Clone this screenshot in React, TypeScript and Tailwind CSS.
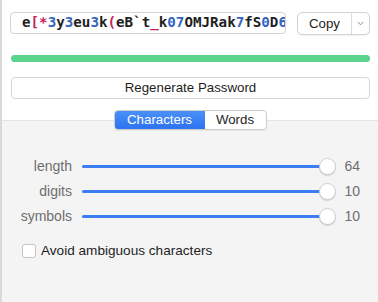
import React from "react";

const pw = "e[*3y3eu3k(eB`t_k07OMJRak7fS0D6p";

function colorFor(c: string) {
  if (/[0-9]/.test(c)) return "text-[#3464c4]";
  if (/[a-zA-Z]/.test(c)) return "text-[#1e1e1e]";
  if (c === "`") return "text-[#1e1e1e]";
  return "text-[#c2245a]";
}

function SliderRow({ label, value }: { label: string; value: string }) {
  return (
    <div className="flex h-[25px] items-center text-[14px]">
      <div className="w-[70px] text-right text-[#6e6e6e]">{label}</div>
      <div className="relative ml-[10px] h-[17px] flex-1">
        <div className="absolute left-0 right-[8px] top-[7px] h-[3px] rounded-full bg-[#3b7ef4]" />
        <div className="absolute right-0 top-0 h-[17px] w-[17px] rounded-full border border-[#cfcfcf] bg-white shadow-[0_1px_1px_rgba(0,0,0,0.15)]" />
      </div>
      <div className="w-[24px] text-right text-[#6e6e6e]">{value}</div>
      <div className="w-[18px]" />
    </div>
  );
}

export default function App() {
  return (
    <div
      className="flex h-[302px] w-[378px] border-l-2 border-[#d9d9d9] text-[13.3px]"
      style={{ fontFamily: '"Liberation Sans", Arial, sans-serif' }}
    >
      <div className="flex flex-1 flex-col">
        <div className="flex h-[120px] flex-col bg-white pl-[8px] pr-[8px] pt-[12px]">
          <div className="flex h-[23px] items-start">
            <div
              className="flex h-[22px] w-[276px] items-center overflow-hidden whitespace-nowrap rounded-[4px] border border-[#d4d4d4] pl-[11px] pr-[6px] text-[14.2px] font-bold"
              style={{ fontFamily: '"DejaVu Sans Mono", "Liberation Mono", monospace' }}
            >
              {pw.split("").map((c, i) => (
                <span key={i} className={colorFor(c)}>
                  {c}
                </span>
              ))}
            </div>
            <div className="ml-[11px] flex h-[23px] w-[73px] rounded-[5px] border border-[#d2d2d2] bg-white shadow-[0_1px_1px_rgba(0,0,0,0.06)]">
              <div className="flex flex-1 items-center justify-center text-[#1e1e1e]">Copy</div>
              <div className="w-px bg-[#dcdcdc]" />
              <div className="flex w-[17px] items-center justify-center">
                <svg width="7" height="5" viewBox="0 0 7 5">
                  <path d="M0.8 1 L3.5 3.8 L6.2 1" fill="none" stroke="#8a8a8a" strokeWidth="1" />
                </svg>
              </div>
            </div>
          </div>
          <div className="ml-[1px] mt-[20px] h-[7px] rounded-full bg-[#5ad38c]" />
          <div className="ml-[1px] mt-[15px] flex h-[22px] items-center justify-center rounded-[4px] border border-[#d6d6d6] bg-white text-[#1e1e1e]">
            Regenerate Password
          </div>
        </div>
        <div className="flex flex-1 flex-col border-t border-[#e4e4e4] bg-[#f4f4f4]">
          <div className="relative -mt-[11px] flex justify-center">
            <div className="flex h-[20px] overflow-hidden rounded-[4px] border border-[#cdcdcd] bg-white shadow-[0_1px_1px_rgba(0,0,0,0.06)]">
              <div className="flex w-[90px] items-center justify-center bg-gradient-to-b from-[#4b90f8] to-[#2d72ef] text-white">
                Characters
              </div>
              <div className="flex w-[61px] items-center justify-center text-[#1e1e1e]">Words</div>
            </div>
          </div>
          <div className="mt-[24px] flex flex-col">
            <SliderRow label="length" value="64" />
            <SliderRow label="digits" value="10" />
            <SliderRow label="symbols" value="10" />
          </div>
          <div className="ml-[20px] mt-[12px] flex items-center">
            <div className="h-[14px] w-[14px] rounded-[3px] border border-[#c4c4c4] bg-white" />
            <span className="ml-[5px] text-[13.6px] text-[#1e1e1e]">Avoid ambiguous characters</span>
          </div>
        </div>
      </div>
    </div>
  );
}
